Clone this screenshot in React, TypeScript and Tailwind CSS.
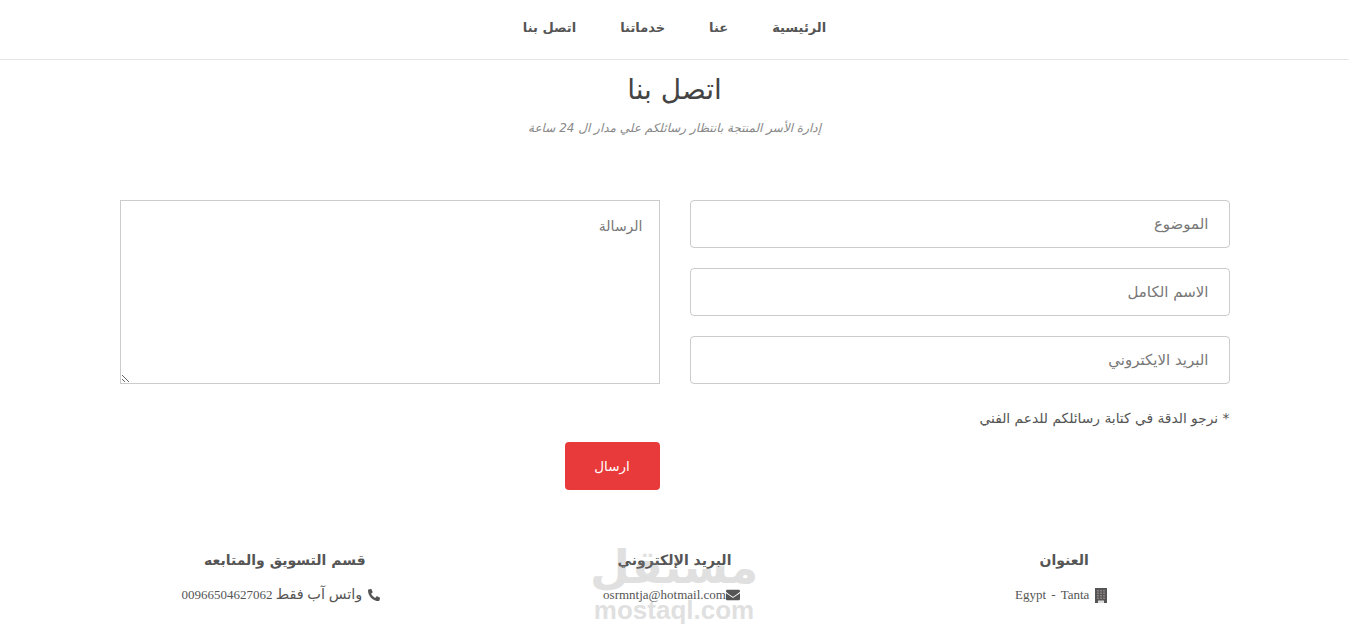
import React from "react";
import { FaEnvelope, FaPhoneAlt } from "react-icons/fa";

const font = "font-['DejaVu_Sans',sans-serif]";
const navLinks = ["الرئيسية", "عنا", "خدماتنا", "اتصل بنا"];

const inputClass =
  "h-12 w-full rounded border border-[#ccc] bg-white px-5 text-[15px] text-[#555] outline-none placeholder:text-[#777]";

const App: React.FC = () => {
  return (
    <div dir="rtl" className={`relative h-[635px] overflow-hidden bg-white text-[#444] ${font}`}>
      <nav className="flex h-[60px] items-center justify-center gap-[44px] border-b border-[#e5e5e5] pb-1">
        {navLinks.map((link) => (
          <a key={link} className="text-[13px] font-bold text-[#555]">
            {link}
          </a>
        ))}
      </nav>

      <div className="mt-[11px] text-center">
        <h1 className="text-[28px] leading-[38px] font-normal text-[#444]">اتصل بنا</h1>
        <p className="mt-[9px] text-xs leading-5 text-[#888] italic">
          إدارة الأسر المنتجة بانتظار رسائلكم علي مدار ال 24 ساعة
        </p>
      </div>

      <form className="mx-auto mt-[62px] w-[1110px]">
        <div className="grid grid-cols-2 gap-[30px]">
          <div className="flex flex-col gap-5">
            <input className={inputClass} placeholder="الموضوع" />
            <input className={inputClass} placeholder="الاسم الكامل" />
            <input className={inputClass} placeholder="البريد الايكتروني" />
          </div>
          <textarea
            className="h-[184px] w-full border border-[#ccc] bg-white px-4 pt-[15px] pb-3 text-sm text-[#555] outline-none placeholder:text-[#777]"
            placeholder="الرسالة"
          />
        </div>
        <p className="mt-6 text-[13.8px] leading-5 text-[#555]">* نرجو الدقة في كتابة رسائلكم للدعم الفني</p>
        <div className="mt-[14px] mr-[570px]">
          <button
            type="button"
            className="h-12 w-[95px] rounded bg-[#e83a3a] text-[13.5px] text-white"
          >
            ارسال
          </button>
        </div>
      </form>

      <footer className="mx-auto mt-[60px] grid w-[1169px] grid-cols-3 text-center">
        <div>
          <h3 className="text-sm leading-5 font-bold text-[#555]">العنوان</h3>
          <p className="mt-[15px] mr-[6px] flex items-center justify-center gap-[6px] font-['Liberation_Serif','DejaVu_Sans',serif] text-[13px] leading-5 text-[#555]">
            <svg width="12" height="15" viewBox="0 0 12 15" className="shrink-0">
              <rect width="12" height="15" fill="#555" />
              <path d="M2 2h8v9H2z" fill="#8d8080" />
              <path d="M2 4h8M2 6.5h8M2 9h8M4.5 2v9M7.5 2v9" stroke="#555" strokeWidth="1" />
              <rect x="3" y="12.5" width="6" height="2.5" fill="#ddd" />
            </svg>
            <span dir="ltr" className="[word-spacing:2px]">Egypt - Tanta</span>
          </p>
        </div>
        <div>
          <h3 className="text-sm leading-5 font-bold text-[#555]">البريد الإلكتروني</h3>
          <p className="mt-[15px] mr-[6px] flex items-center justify-center font-['Liberation_Serif','DejaVu_Sans',serif] text-[13px] leading-5 text-[#555]">
            <FaEnvelope size={14} className="shrink-0 text-[#555]" />
            <span dir="ltr">osrmntja@hotmail.com</span>
          </p>
        </div>
        <div>
          <h3 className="text-sm leading-5 font-bold text-[#555]">قسم التسويق والمتابعه</h3>
          <p className="mt-[14px] mr-[8px] flex items-center justify-center gap-[6px] font-['Liberation_Serif','DejaVu_Sans',serif] text-[13px] leading-5 text-[#555]">
            <FaPhoneAlt size={12} className="shrink-0 text-[#555]" />
            <span>
              <span className="text-[14.5px]">واتس آب فقط</span> 00966504627062
            </span>
          </p>
        </div>
      </footer>

      {/* watermark */}
      <div className="pointer-events-none absolute top-[536px] left-[592px] flex w-[164px] flex-col items-center text-[#888] opacity-25">
        <span className="text-[46px] leading-[62px] font-bold">مستقل</span>
        <span dir="ltr" className="text-[26px] leading-6 font-['Liberation_Sans',sans-serif] font-bold">
          mostaql.com
        </span>
      </div>
    </div>
  );
};

export default App;
